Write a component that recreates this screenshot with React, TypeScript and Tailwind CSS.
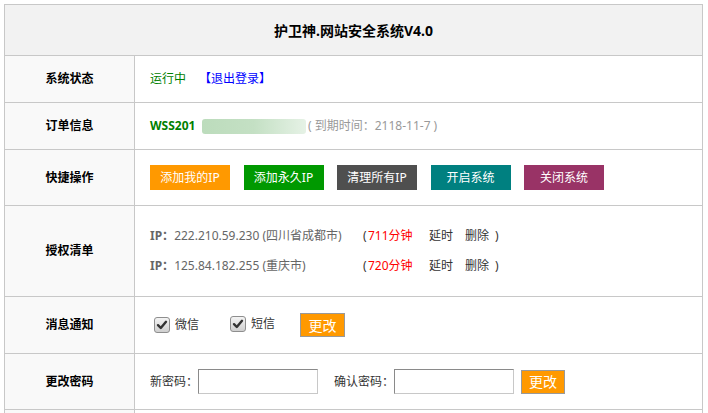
import React from "react";

const font = { fontFamily: '"Noto Sans", "Noto Sans CJK SC", sans-serif' };

function Row({ label, h, children }: { label: string; h: string; children?: React.ReactNode }) {
  return (
    <div className={`flex border-b border-[#c8c8c8] ${h}`}>
      <div className="w-[130px] shrink-0 border-r border-[#c8c8c8] bg-[#f9f9f9] flex items-center justify-center text-[12px] font-bold text-black">
        {label}
      </div>
      <div className="flex-1 pl-[15px] flex items-center text-[12px]">{children}</div>
    </div>
  );
}

function Check({ label }: { label: string }) {
  return (
    <span className="inline-flex items-center">
      <span className="ml-[4px] w-[16px] h-[16px] rounded-[3px] border border-[#8e8e8e] bg-gradient-to-b from-[#f4f4f4] to-[#cfcfcf] flex items-center justify-center">
        <svg width="12" height="12" viewBox="0 0 12 12">
          <path d="M2 6.2 L4.8 9 L10 2.8" fill="none" stroke="#333" strokeWidth="2.4" strokeLinecap="round" strokeLinejoin="round" />
        </svg>
      </span>
      <span className="ml-[5px] text-[#333]">{label}</span>
    </span>
  );
}

const ips = [
  { ip: "222.210.59.230", city: "四川省成都市", min: "711" },
  { ip: "125.84.182.255", city: "重庆市", min: "720" },
];

const buttons = [
  { text: "添加我的IP", bg: "bg-[#ff9900]" },
  { text: "添加永久IP", bg: "bg-[#009900]" },
  { text: "清理所有IP", bg: "bg-[#4f4f4f]" },
  { text: "开启系统", bg: "bg-[#008080]" },
  { text: "关闭系统", bg: "bg-[#993366]" },
];

export default function App() {
  return (
    <div className="bg-white min-h-[413px] pt-1 pl-1" style={font}>
      <div className="w-[699px] border border-[#c8c8c8] border-b-0">
        <div className="h-[51px] bg-[#f2f2f2] border-b border-[#c8c8c8] flex items-center justify-center text-[14px] font-bold text-black">
          护卫神.网站安全系统V4.0
        </div>

        <Row label="系统状态" h="h-[47px]">
          <span className="text-[#008000]">运行中</span>
          <a className="ml-[13px] text-[#0000ff]">【退出登录】</a>
        </Row>

        <Row label="订单信息" h="h-[47px]">
          <span className="w-[52px] font-bold text-[#008000]">WSS201</span>
          <span className="w-[104px] h-[15px] rounded-[3px] bg-gradient-to-r from-[#bcdcbc] via-[#c4e0c4] to-[#e6f2e6] blur-[0.5px]" />
          <span className="ml-[2px] text-[#999]">( 到期时间：2118-11-7 )</span>
        </Row>

        <Row label="快捷操作" h="h-[56px]">
          <div className="flex gap-[13.5px]">
            {buttons.map((b) => (
              <span key={b.text} className={`w-[80px] h-[25px] flex items-center justify-center text-white ${b.bg}`}>
                {b.text}
              </span>
            ))}
          </div>
        </Row>

        <Row label="授权清单" h="h-[91px]">
          <div className="flex flex-col">
            {ips.map((r) => (
              <div key={r.ip} className="h-[30px] flex items-center">
                <span className="w-[213px] text-[#666]">
                  <b>IP：</b>
                  {r.ip} ({r.city})
                </span>
                <span className="w-[5px] text-[#333]">(</span>
                <span className="w-[61px] text-[#ff0000]">{r.min}分钟</span>
                <a className="w-[36px] text-[#333]">延时</a>
                <a className="w-[30px] text-[#333]">删除</a>
                <span className="text-[#333]">)</span>
              </div>
            ))}
          </div>
        </Row>

        <Row label="消息通知" h="h-[57px]">
          <Check label="微信" />
          <span className="ml-[27px]">
            <Check label="短信" />
          </span>
          <span className="ml-[25px] w-[45px] h-[24px] border border-[#999] bg-[#ff9900] text-white text-[14px] flex items-center justify-center">
            更改
          </span>
        </Row>

        <Row label="更改密码" h="h-[56px]">
          <span className="text-[#333]">新密码：</span>
          <input className="w-[120px] h-[25px] border border-t-[#8a8a8a] border-l-[#8a8a8a] border-r-[#c8c8c8] border-b-[#c8c8c8] outline-none" />
          <span className="ml-[16px] text-[#333]">确认密码：</span>
          <input className="w-[120px] h-[25px] border border-t-[#8a8a8a] border-l-[#8a8a8a] border-r-[#c8c8c8] border-b-[#c8c8c8] outline-none" />
          <span className="ml-[7px] w-[44px] h-[24px] border border-[#999] bg-[#ff9900] text-white text-[14px] flex items-center justify-center">
            更改
          </span>
        </Row>

        <Row label="" h="h-[50px]" />
      </div>
    </div>
  );
}
